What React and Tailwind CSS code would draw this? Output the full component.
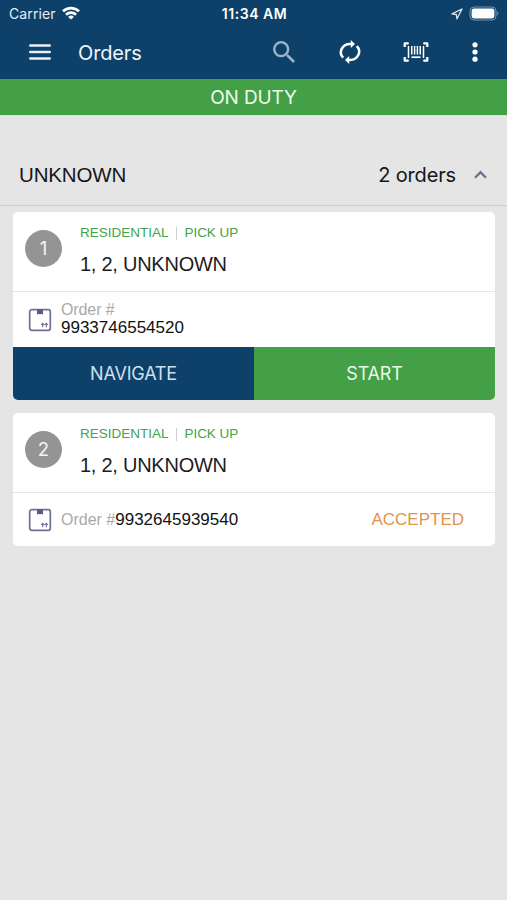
const SF = "font-['Inter','Liberation_Sans',sans-serif]";

function WifiIcon() {
  return (
    <svg className="mb-[1px] ml-[6px] h-[14px] w-[18px]" viewBox="0 0 18 14" fill="none" stroke="#fff" strokeWidth="2.7">
      <path d="M1 5.4a11.4 11.4 0 0 1 16 0" />
      <path d="M4 8.7a7.2 7.2 0 0 1 10 0" />
      <path d="M9 13.6 6.1 10.9a4.2 4.2 0 0 1 5.800 0Z" fill="#fff" stroke="none" />
    </svg>
  );
}

function StatusBar() {
  return (
    <div className="flex h-[27px] items-center pl-[9px] pr-[7px] text-white">
      <div className="flex flex-1 items-center">
        <span className="text-[14px] leading-[27px] tracking-[0.12px] text-[#e4edf5]">Carrier</span>
        <WifiIcon />
      </div>
      <span className="text-[14px] font-semibold leading-[27px] tracking-[0.55px]">11:34 AM</span>
      <div className="flex flex-1 items-center justify-end">
        <svg className="h-[12px] w-[12px]" viewBox="0 0 12 12" fill="none" stroke="#dce8f2" strokeWidth="1.3" strokeLinejoin="round">
          <path d="M11 1 1 5.800l4.300.7.7 4.300Z" />
        </svg>
        <svg className="ml-[6px] h-[15px] w-[31px]" viewBox="0 0 31 15" fill="none">
          <rect x="1" y="1" width="26" height="13" rx="4" stroke="#7895ae" />
          <rect x="2.600" y="2.600" width="22.800" height="9.800" rx="2.400" fill="#fff" />
          <path d="M28.200 5.300c1.500.6 1.500 3.800 0 4.400Z" fill="#7895ae" />
        </svg>
      </div>
    </div>
  );
}

function Toolbar() {
  return (
    <div className="flex h-[52px] items-center pl-[29px] pr-[29px] text-white">
      <svg className="mb-[2px] h-[16px] w-[22px]" viewBox="0 0 22 16" stroke="#e6f1fb" strokeWidth="2.6" strokeLinecap="round">
        <path d="M1.300 1.500h19.400M1.300 8h19.400M1.300 14.500h19.400" />
      </svg>
      <span className="ml-[27px] text-[20px] leading-[52px] tracking-[-0.15px] text-[#eef5fb]">Orders</span>
      <div className="mb-[2px] flex flex-1 items-center justify-end">
        <svg className="mb-[1px] h-[22px] w-[22px]" viewBox="3 3 17.500 17.500" fill="#9db3c7">
          <path d="M15.500 14h-.79l-.28-.27A6.470 6.470 0 0 0 16 9.500 6.500 6.500 0 1 0 9.500 16c1.610 0 3.090-.59 4.230-1.570l.27.28v.79l5 4.990L20.490 19l-4.990-5zm-6 0C7.010 14 5 11.990 5 9.500S7.010 5 9.500 5 14 7.010 14 9.500 11.990 14 9.500 14z" />
        </svg>
        <svg className="ml-[42px] h-[26px] w-[26px]" viewBox="0 0 26 26" fill="none" stroke="#fff" strokeWidth="2.500">
          <path d="M6.200 18.700A9.200 8.300 0 0 1 13 4.900h1.500" />
          <path d="M19.800 7.100A9.200 8.300 0 0 1 13 20.900h-1.500" />
          <path d="M13.800 1 18 4.900 13.800 8.900Z" fill="#fff" stroke="none" />
          <path d="M12.200 16.900 8 20.900l4.200 4Z" fill="#fff" stroke="none" />
        </svg>
        <svg className="ml-[40px] h-[22px] w-[26px]" viewBox="0 0 26 22" fill="none" stroke="#fff">
          <path strokeWidth="2.200" strokeLinejoin="round" d="M1.700 6V2.300h4M20.300 2.300h4V6M24.300 16v3.700h-4M5.700 19.700h-4V16" />
          <path strokeWidth="1.500" d="M5.500 5v12M20.500 5v12" />
          <path strokeWidth="1.500" d="M8.750 5v8.500M11.600 5v8.500M14.400 5v8.500M17.250 5v8.500" />
          <path strokeWidth="1.700" d="M8.500 16.200h9" />
        </svg>
        <svg className="ml-[43px] h-[20px] w-[6px]" viewBox="0 0 6 20" fill="#fff">
          <circle cx="3" cy="2.800" r="2.600" />
          <circle cx="3" cy="10" r="2.600" />
          <circle cx="3" cy="17.200" r="2.600" />
        </svg>
      </div>
    </div>
  );
}

function PackageIcon() {
  return (
    <svg className="h-[24px] w-[24px] shrink-0" viewBox="0 0 24 24" fill="none">
      <rect x="1.700" y="1.700" width="20.600" height="20.600" rx="2" stroke="#736f98" strokeWidth="1.700" />
      <path d="M9 1.500h6v5l-1.500-.8-1.500.8-1.500-.8-1.500.8Z" fill="#5b5786" />
      <path d="M14.700 19.300v-4M18.300 19.300v-4M13.200 16.900l1.500-1.500 1.500 1.500M16.800 16.900l1.500-1.500 1.500 1.500" stroke="#736f98" strokeWidth="1.100" />
    </svg>
  );
}

function CardHead({ number }) {
  return (
    <div className="flex h-[80px] border-b border-[#e6e6e6] pl-[12px]">
      <div className={`mt-[18px] flex h-[37px] w-[37px] items-center justify-center rounded-full bg-[#949494] pt-[1px] text-[18.5px] text-[#f4f4f4] ${SF}`}>
        {number}
      </div>
      <div className="ml-[18px] pt-[12px]">
        <div className="flex items-center text-[13.5px] leading-[18px] text-[#43a348]">
          <span>RESIDENTIAL</span>
          <span className="mx-[7.5px] h-[13px] w-px bg-[#cfcfcf]" />
          <span className="tracking-[-0.06px]">PICK UP</span>
        </div>
        <div className="mt-[9px] text-[20px] leading-[26px] tracking-[-0.25px] text-[#1c1c1c]">1, 2, UNKNOWN</div>
      </div>
    </div>
  );
}

export default function App() {
  return (
    <div className="flex h-[900px] w-full flex-col overflow-hidden bg-[#e5e5e5] font-['Liberation_Sans',Arial,sans-serif]">
      <header className={`bg-[#0e4169] ${SF}`}>
        <StatusBar />
        <Toolbar />
      </header>
      <div className={`h-[37px] border-b border-[#d5e5d5] bg-[#43a047] text-center text-[19px] leading-[37px] tracking-[-0.15px] text-[#effaef] ${SF}`}>ON DUTY</div>
      <div className="flex h-[90px] items-center border-b border-[#cfcfcf] pl-[19px] pr-[20px] pt-[28px] text-[#161616]">
        <span className="flex-1 pt-[2px] text-[20.5px] tracking-[-0.15px]">UNKNOWN</span>
        <span className={`text-[20px] tracking-[-0.15px] ${SF}`}>2 orders</span>
        <svg className="ml-[18px] h-[9px] w-[13px]" viewBox="0 0 13 9" fill="none" stroke="#6f6c8e" strokeWidth="2.300">
          <path d="m1 7.800 5.500-5.700L12 7.800" />
        </svg>
      </div>
      <main className="flex flex-col gap-[13px] pl-[13px] pr-[12px] pt-[6px]">
        <section className="overflow-hidden rounded-[5px] bg-white">
          <CardHead number="1" />
          <div className="flex h-[55px] items-center pl-[15px]">
            <PackageIcon />
            <div className="mb-[2px] ml-[9px]">
              <div className="text-[16px] leading-[17px] tracking-[-0.1px] text-[#a9a9a9]">Order #</div>
              <div className="text-[17px] leading-[19px] text-[#111]">9933746554520</div>
            </div>
          </div>
          <div className={`flex h-[53px] text-[18px] leading-[54px] tracking-[-0.2px] ${SF}`}>
            <div className="flex-1 bg-[#0e4169] text-center text-[#cfe0ee]">NAVIGATE</div>
            <div className="flex-1 bg-[#43a047] text-center text-[#e9f8e9]">START</div>
          </div>
        </section>
        <section className="overflow-hidden rounded-[5px] bg-white">
          <CardHead number="2" />
          <div className="flex h-[53px] items-center pl-[15px] pr-[31px]">
            <PackageIcon />
            <span className="ml-[9px] text-[16px] text-[#a9a9a9]">Order #</span>
            <span className="flex-1 text-[17px] text-[#111]">9932645939540</span>
            <span className="text-[17px] text-[#e2934a]">ACCEPTED</span>
          </div>
        </section>
      </main>
    </div>
  );
}
